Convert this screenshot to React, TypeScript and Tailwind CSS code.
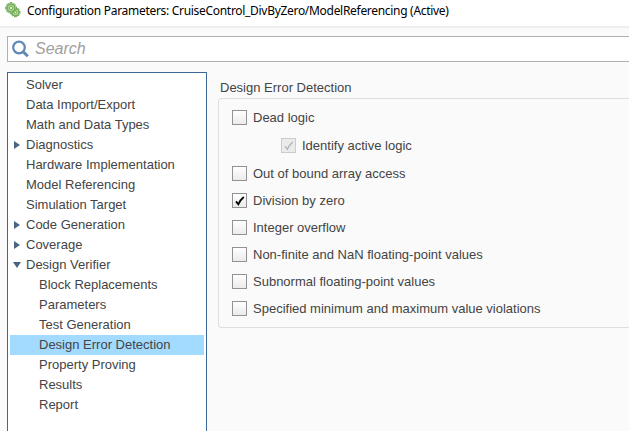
import React from 'react';

type TreeItem = { label: string; arrow?: 'right' | 'down'; child?: boolean; selected?: boolean };

const tree: TreeItem[] = [
  { label: 'Solver' },
  { label: 'Data Import/Export' },
  { label: 'Math and Data Types' },
  { label: 'Diagnostics', arrow: 'right' },
  { label: 'Hardware Implementation' },
  { label: 'Model Referencing' },
  { label: 'Simulation Target' },
  { label: 'Code Generation', arrow: 'right' },
  { label: 'Coverage', arrow: 'right' },
  { label: 'Design Verifier', arrow: 'down' },
  { label: 'Block Replacements', child: true },
  { label: 'Parameters', child: true },
  { label: 'Test Generation', child: true },
  { label: 'Design Error Detection', child: true, selected: true },
  { label: 'Property Proving', child: true },
  { label: 'Results', child: true },
  { label: 'Report', child: true },
];

const options = [
  { label: 'Out of bound array access' },
  { label: 'Division by zero', checked: true },
  { label: 'Integer overflow' },
  { label: 'Non-finite and NaN floating-point values' },
  { label: 'Subnormal floating-point values' },
  { label: 'Specified minimum and maximum value violations' },
];

function Gear() {
  const teeth = [0, 45, 90, 135, 180, 225, 270, 315];
  return (
    <svg className="h-4 w-4 shrink-0" viewBox="0 0 16 16">
      <g fill="#b5d99a" stroke="#57983f" strokeWidth="0.7">
        <g transform="translate(10.4 10.2)">
          {teeth.map((a) => (
            <rect key={a} x="-1" y="-4.6" width="2" height="2" transform={`rotate(${a})`} />
          ))}
          <circle r="3.4" />
          <circle r="1.3" fill="#eaf5e2" />
        </g>
        <g transform="translate(6 6)">
          {teeth.map((a) => (
            <rect key={a} x="-1.1" y="-5.3" width="2.2" height="2" transform={`rotate(${a})`} />
          ))}
          <circle r="4" fill="#a5d286" />
          <circle r="1.6" fill="#eef8e8" />
        </g>
      </g>
    </svg>
  );
}

function Arrow({ dir }: { dir?: 'right' | 'down' }) {
  return (
    <svg className="h-5 w-4 shrink-0" viewBox="0 0 16 20">
      {dir === 'right' && <path d="M4 6v8l6-4z" fill="#4a6583" />}
      {dir === 'down' && <path d="M3 7h8l-4 6z" fill="#4a6583" />}
    </svg>
  );
}

function Check({ label, checked, disabled }: { label: string; checked?: boolean; disabled?: boolean }) {
  return (
    <div className="flex h-[15px] items-center gap-1.5">
      <span
        className={
          disabled
            ? 'block h-[15px] w-[15px] shrink-0 border border-[#cccccc] bg-[#ebebeb]'
            : 'block h-[15px] w-[15px] shrink-0 border border-[#929292] bg-linear-to-b from-white to-[#ebebeb]'
        }
      >
        {checked && (
          <svg className="block h-[13px] w-[13px]" viewBox="0 0 13 13" fill="none">
            <path
              d="M3 7.4L5.3 10.3Q7 6.2 10.8 3"
              stroke={disabled ? '#b0b0b0' : '#000000'}
              strokeWidth={disabled ? 1.3 : 1.8}
            />
          </svg>
        )}
      </span>
      <span className="whitespace-nowrap">{label}</span>
    </div>
  );
}

export default function App() {
  return (
    <div className="flex h-[431px] w-[629px] flex-col overflow-hidden bg-[#fafafa] font-['Liberation_Sans',Arial,sans-serif] text-[13px] leading-5 text-[#444444]">
      <header className="flex h-7 shrink-0 items-start gap-1.5 border-b-2 border-[#eeeeee] bg-white pt-0.5 pl-[5px] font-['Noto_Sans','Open_Sans',sans-serif] text-[12px] leading-[18px] text-black">
        <Gear />
        <h1 className="whitespace-nowrap tracking-[-0.3px]">
          Configuration Parameters: CruiseControl_DivByZero/ModelReferencing (Active)
        </h1>
      </header>
      <div className="mt-2 ml-[7px] flex h-[26px] shrink-0 items-center border-y border-l border-[#b0b0b0] bg-white pl-1">
        <svg className="h-[18px] w-[18px] shrink-0" viewBox="0 0 18 18" fill="none" stroke="#5f88b3">
          <circle cx="7" cy="7.5" r="5.8" strokeWidth="2.2" />
          <path d="M11.5 12l4.3 4.3" strokeWidth="3" />
        </svg>
        <span className="ml-[5px] text-[16px] leading-[22px] text-[#a0a0a0] italic">Search</span>
      </div>
      <main className="mt-2.5 ml-[7px] flex min-h-0 flex-1 gap-[11px]">
        <nav className="w-[200px] shrink-0 border-x border-t border-[#3b6897] bg-white px-0.5 pt-0.5">
          {tree.map((t) => (
            <div
              key={t.label}
              className={`flex h-5 items-center ${t.selected ? 'bg-[#a3daff]' : ''} ${t.child ? 'pl-[13px]' : ''}`}
            >
              <Arrow dir={t.arrow} />
              <span className="whitespace-nowrap">{t.label}</span>
            </div>
          ))}
        </nav>
        <section className="min-w-0 flex-1 pt-1.5">
          <h2 className="h-5 pl-0.5">Design Error Detection</h2>
          <div className="flex h-[230px] flex-col rounded-l-[4px] border-y border-l border-[#dedede] pt-[11px] pl-[13px]">
            <Check label="Dead logic" />
            <div className="my-[13px] pl-[49px]">
              <Check label="Identify active logic" checked disabled />
            </div>
            <div className="flex flex-col gap-3">
              {options.map((o) => (
                <Check key={o.label} label={o.label} checked={o.checked} />
              ))}
            </div>
          </div>
        </section>
      </main>
    </div>
  );
}
